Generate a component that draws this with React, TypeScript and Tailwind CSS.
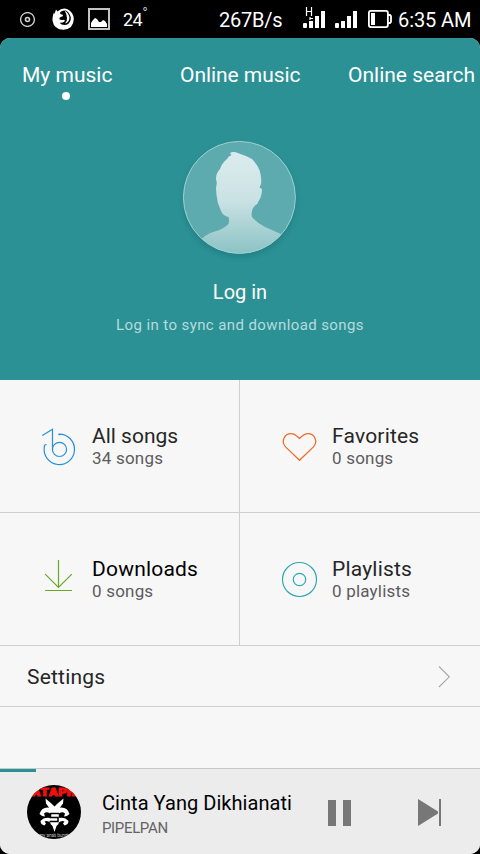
import type { ReactNode } from "react";

function Signal() {
  return (
    <g fill="#fff">
      <rect x="0" y="12" width="4" height="5" rx="1" />
      <rect x="6" y="10" width="4" height="7" />
      <rect x="12" y="5" width="4" height="12" />
      <rect x="18" y="0" width="4" height="17" />
    </g>
  );
}

function StatusBar() {
  return (
    <div className="flex h-[38px] shrink-0 items-start whitespace-nowrap pl-[20px] text-white">
      <svg className="mt-[12px] shrink-0" width="15" height="15" viewBox="0 0 15 15" fill="none" stroke="#d4d4d4">
        <circle cx="7.5" cy="7.5" r="6.9" strokeWidth="1.3" />
        <circle cx="7.5" cy="7.5" r="2" strokeWidth="1.6" />
      </svg>
      <svg className="ml-[17px] mt-[8px] shrink-0" width="22" height="22" viewBox="0 0 22 22">
        <path fill="#fff" d="M4 1.500 5.500 3.500Q10-.5 15 1Q21.500 4 21.800 11Q21.500 21 11.500 21.800Q2 21.500 .6 13Q0 8 2 4.500L2.500 6Z" />
        <path fill="#000" d="M8 4.500Q10 2 14 2.500Q19 6 18.800 11Q18 16.500 13 17Q9 17 7.500 14.500Q10 15.500 12.500 13.500Q13.500 12.300 12 11.800Q9 12.300 7.300 11.300L7.800 9.600L11 8L10.500 6.500L8.500 6.300Z" />
        <path fill="#fff" d="M12.500 2.200Q18 6 17.300 11Q16.500 14.800 13 15.500Q15.300 13 15 10Q14.800 6 12.500 2.200Z" />
      </svg>
      <svg className="ml-[14px] mt-[8px] shrink-0" width="22" height="22" viewBox="0 0 22 22">
        <rect x="1" y="1" width="20" height="20" fill="none" stroke="#c4c4c4" strokeWidth="2" />
        <path fill="#fff" d="M3 19v-4l2-3 2-2 2 1 2 3 2 0 2-2 2 1 2 3v3z" />
      </svg>
      <div className="ml-[13px] mt-[7px] flex w-[96px] text-[18px] leading-[25px] tracking-[-0.5px]">
        24<span className="mt-[-4px] text-[15px] leading-[21px] text-[#bbb]">°</span>
      </div>
      <div className="mt-[8px] w-[84px] text-[20px] leading-[25px] tracking-[-0.25px]">267B/s</div>
      <svg className="mt-[6px] shrink-0" width="22" height="22" viewBox="0 0 22 22">
        <g transform="translate(0 5)"><Signal /></g>
        <path d="M3 1v8M9 1v8M3 5h6" stroke="#000" strokeWidth="3.500" />
        <path d="M3.500 1v9M8.500 1v9M3 5.500h6" fill="none" stroke="#fff" strokeWidth="1.200" />
        <path d="M7 11v3M7 12.500h3" fill="none" stroke="#fff" strokeWidth="1.200" />
      </svg>
      <svg className="ml-[10px] mt-[11px] shrink-0" width="22" height="17" viewBox="0 0 22 17"><Signal /></svg>
      <svg className="ml-[11px] mt-[10px] shrink-0" width="24" height="18" viewBox="0 0 24 18">
        <rect x=".9" y=".9" width="19" height="16.200" rx="2" fill="none" stroke="#fff" strokeWidth="1.800" />
        <rect x="3" y="3" width="4" height="12" fill="#fff" />
        <path d="M20 5h2l1 1v6l-1 1h-2" fill="none" stroke="#fff" strokeWidth="1.800" />
      </svg>
      <div className="ml-[6px] mt-[8px] text-[20px] leading-[25px] tracking-[-0.1px]">6:35 AM</div>
    </div>
  );
}

function Avatar() {
  return (
    <svg className="mx-auto mt-[34px] block overflow-visible" width="122" height="127" viewBox="0 0 122 127">
      <defs>
        <linearGradient id="person" x1="0" y1="0" x2="0" y2="1">
          <stop offset="0" stopColor="#dcecee" />
          <stop offset=".45" stopColor="#cae2e4" />
          <stop offset="1" stopColor="#85bfc1" />
        </linearGradient>
        <clipPath id="round"><circle cx="60.400" cy="63.400" r="56" /></clipPath>
        <filter id="shade" x="-20%" y="-20%" width="140%" height="140%"><feGaussianBlur stdDeviation="3" /></filter>
      </defs>
      <circle cx="60.400" cy="67" r="55.500" fill="#0b6067" opacity=".4" filter="url(#shade)" />
      <circle cx="60.400" cy="63.400" r="56" fill="#5dabaf" />
      <g clipPath="url(#round)">
        <path
          fill="url(#person)"
          d="M51 19Q54 17 60 19.500Q68 22 73 25Q78 30 80.500 36Q83 44 82 50L80.500 53.500L83 55Q83 62 80 66.500Q79 70 75.500 72Q71.500 76 73 83Q78 89 86 93L103 100.500L108 125H12L23 105Q26 101 34 98Q45 95 49.500 90Q50.500 86 49.500 83Q44 82 42 77Q38 69 37.500 61L37 54L37.800 49L37 45Q37 39 41 35Q43 29 48 25Q49 22.500 52.500 21Z"
        />
      </g>
      <circle cx="60.400" cy="63.400" r="56" fill="none" stroke="#9fd0d2" strokeWidth="1" />
    </svg>
  );
}

function Cell({ icon, title, sub, className, titleClass }: { icon: ReactNode; title: string; sub: string; className: string; titleClass: string }) {
  return (
    <div className={`flex h-[133px] border-b border-[#cfcfcf] pl-[40px] ${className}`}>
      <svg className="mt-[46px] shrink-0" width="40" height="40" viewBox="0 0 40 40" fill="none" strokeWidth="1.200">
        {icon}
      </svg>
      <div className="ml-[12px] mt-[44px] whitespace-nowrap">
        <div className={`text-[21px] leading-[24px] ${titleClass}`}>{title}</div>
        <div className="text-[17px] leading-[20px] tracking-[0.2px] text-[#5c5c5c]">{sub}</div>
      </div>
    </div>
  );
}

function AlbumArt() {
  return (
    <svg className="mt-[16px] shrink-0" width="54" height="54" viewBox="0 0 54 54">
      <defs><clipPath id="disc"><circle cx="27" cy="27" r="27" /></clipPath></defs>
      <g clipPath="url(#disc)">
        <rect width="54" height="54" fill="#000" />
        <text x="4.500" y="10.700" fill="#f01010" stroke="#f01010" strokeWidth="1" fontFamily="DejaVu Sans Mono, monospace" fontWeight="700" fontSize="10" textLength="44" lengthAdjust="spacingAndGlyphs">ATAPH</text>
        <g fill="#fff">
          <path d="M18.500 13.500 25 19 27.500 21.500 30 19 36.500 13.500 36 18.500 32 24 31.500 39 29.500 41 27.500 47 25.500 41 23.500 39 23 24 19 18.500Z" />
          <path d="M24 23Q15 21 12.500 29Q15 31.500 18 31.500L17 28.500Q20 26 24 29ZM31 23Q40 21 42.500 29Q40 31.500 37 31.500L38 28.500Q35 26 31 29Z" />
          <path d="M24 33Q17 31.500 13.500 36Q13.500 39.500 17.500 40.500L19 38.500L17.500 36.500Q20 35 24 38ZM31 33Q38 31.500 41.500 36Q41.500 39.500 37.500 40.500L36 38.500L37.500 36.500Q35 35 31 38Z" />
        </g>
        <path fill="none" stroke="#000" strokeWidth="1.500" d="M32 28.500h-8.500v4h7.500v4h-8.500" />
        <text x="12" y="52" fill="#b8b8b8" fontFamily="Roboto, sans-serif" fontSize="5" textLength="31">my ana's bunda</text>
      </g>
    </svg>
  );
}

export default function App() {
  return (
    <div className="flex h-[854px] w-[480px] flex-col overflow-hidden bg-black font-[Roboto,sans-serif]">
      <StatusBar />
      <div className="flex flex-1 flex-col overflow-hidden rounded-[10px] bg-[#f7f7f7]">
        <header className="h-[342px] shrink-0 bg-[#2c9195] text-white">
          <nav className="grid grid-cols-[158px_168px_132px] whitespace-nowrap pl-[22px] pt-[23px] text-[21px] leading-[28px]">
            <div className="w-[90px]">
              My music
              <div className="ml-[40px] mt-[3px] h-[8px] w-[8px] rounded-full bg-white" />
            </div>
            <div className="tracking-[-0.05px]">Online music</div>
            <div>Online search</div>
          </nav>
          <Avatar />
          <div className="mt-[19px] text-center text-[20px] leading-[24px]">Log in</div>
          <div className="mt-[11px] text-center text-[15px] leading-[20px] tracking-[0.4px] text-[#b5dbdc]">Log in to sync and download songs</div>
        </header>
        <div className="grid shrink-0 grid-cols-2">
          <Cell
            title="All songs"
            sub="34 songs"
            className="border-r"
            titleClass="text-[#262626]"
            icon={
              <g stroke="#2590d8">
                <path d="M2.300 9.500 12.500 3.300V23.500" />
                <circle cx="19.500" cy="23.400" r="7.100" />
                <path d="M19 9.200V8.200A15.200 15.200 0 1 1 4.300 21Q4 18.500 6.500 18.600" />
              </g>
            }
          />
          <Cell
            title="Favorites"
            sub="0 songs"
            className=""
            titleClass="text-[#262626] tracking-[0.2px]"
            icon={<path stroke="#ee6a24" d="M19.500 34.300 5.800 21.200C.5 15.500 4.500 7.600 11 7.600C15 7.600 16.500 9.500 19.500 12.500C22.500 9.500 24 7.600 28 7.600C34.500 7.600 38.500 15.500 33.200 21.200Z" />}
          />
          <Cell
            title="Downloads"
            sub="0 songs"
            className="border-r"
            titleClass="text-black tracking-[0.2px]"
            icon={<path stroke="#65aa20" d="M18.500 1V28.300M5.200 15.200 18.500 28.500 31.800 15.200M5 31.500H32" />}
          />
          <Cell
            title="Playlists"
            sub="0 playlists"
            className=""
            titleClass="text-[#262626] tracking-[0.2px]"
            icon={<g stroke="#2aa9b2"><circle cx="19.500" cy="20.500" r="17" /><circle cx="19.500" cy="20.500" r="6.200" /></g>}
          />
        </div>
        <div className="flex h-[61px] shrink-0 items-center justify-between border-b border-[#cfcfcf] pl-[27px] pr-[29px]">
          <span className="pt-[2px] text-[21px] leading-[24px] tracking-[0.2px] text-[#262626]">Settings</span>
          <svg width="13" height="23" viewBox="0 0 13 23" fill="none" stroke="#a8a8a8" strokeWidth="1.100">
            <path d="M1 1.500 11.300 11.800 1 22" />
          </svg>
        </div>
        <footer className="mt-auto h-[86px] shrink-0 border-t border-[#c8c8c8] bg-[#ececec]">
          <div className="h-[3px] w-[36px] bg-[#2c9195]" />
          <div className="mt-[-3px] flex h-[85px] items-start whitespace-nowrap pl-[27px]">
            <AlbumArt />
            <div className="ml-[21px] mt-[22px] w-[226px]">
              <div className="text-[20px] leading-[24px] tracking-[0.05px] text-black">Cinta Yang Dikhianati</div>
              <div className="mt-[3px] text-[15px] leading-[20px] tracking-[-0.35px] text-[#636363]">PIPELPAN</div>
            </div>
            <div className="mt-[31px] flex gap-[7px]">
              <div className="h-[26px] w-[8px] bg-[#777]" />
              <div className="h-[26px] w-[8px] bg-[#777]" />
            </div>
            <svg className="ml-[67px] mt-[30px]" width="23" height="27" viewBox="0 0 23 27" fill="#777">
              <path d="M0 0 20 12.500V14.500L0 27Z" />
              <rect x="21" width="2" height="27" />
            </svg>
          </div>
        </footer>
      </div>
    </div>
  );
}
